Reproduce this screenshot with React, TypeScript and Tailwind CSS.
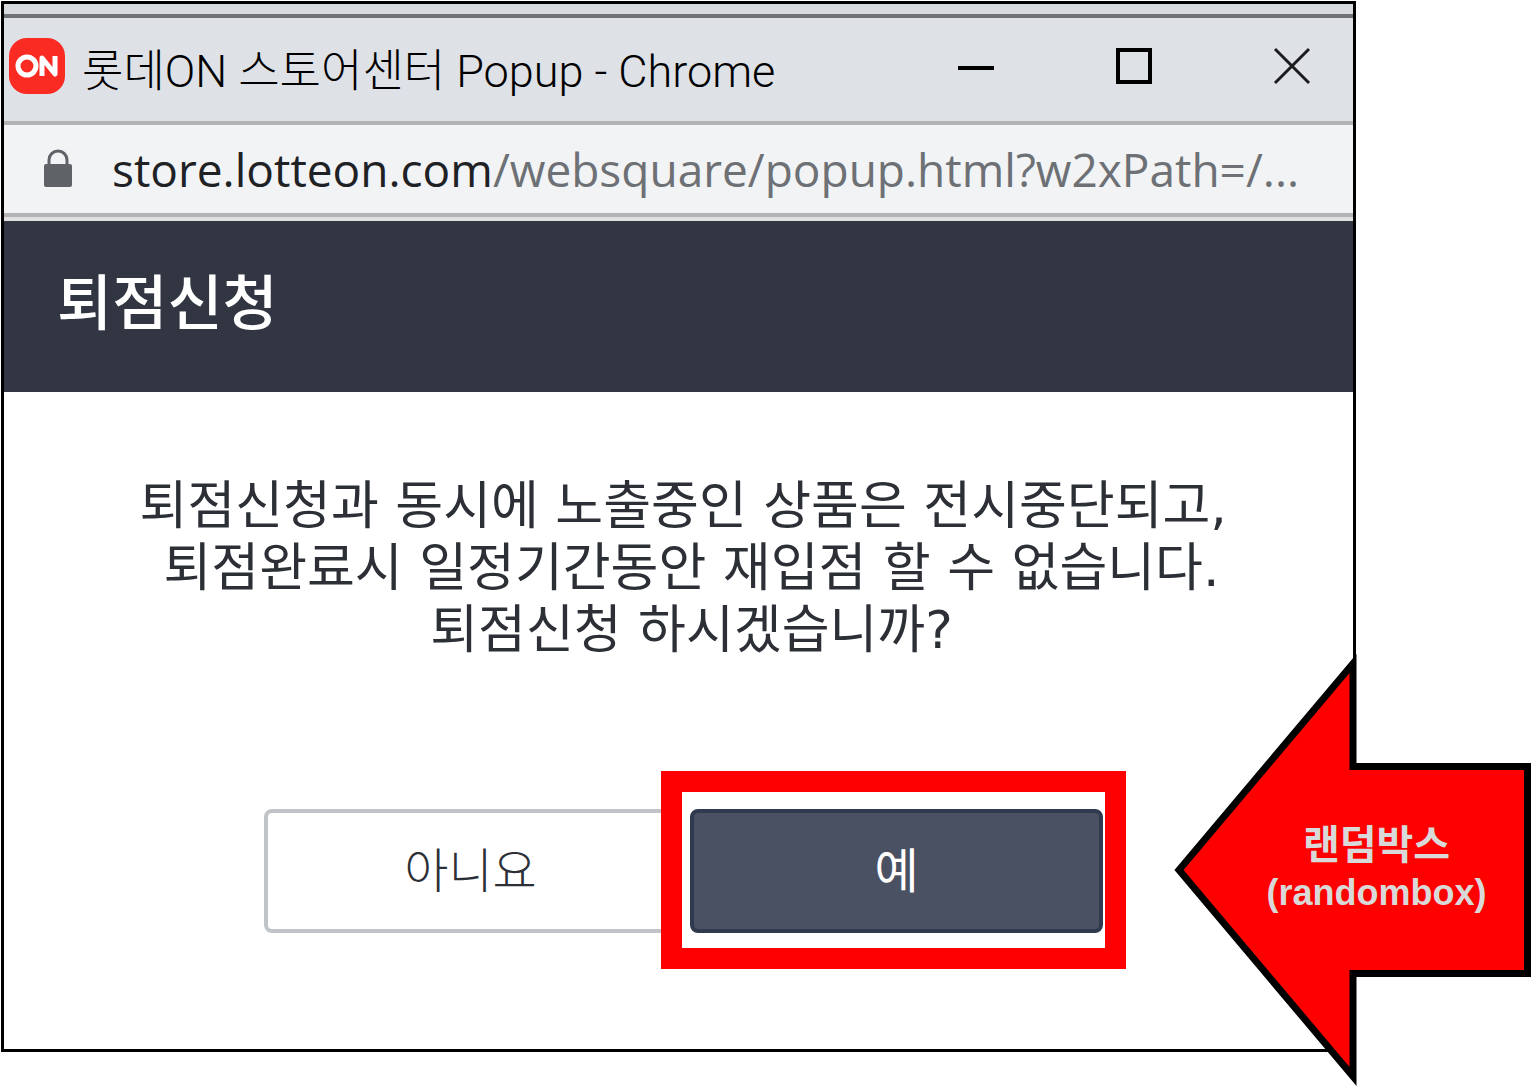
import React from 'react';

const TitleBar: React.FC = () => (
  <header className="flex h-[107px] items-center justify-between border-b-4 border-[#b3b3b3] bg-[#dee1e6] pl-1 pr-10 pb-2">
    <div className="flex items-center gap-4">
      <svg width="58" height="58" viewBox="0 0 58 58" aria-hidden="true">
        <rect x="1" y="1" width="56" height="56" rx="18" fill="#f92b23" />
        <circle cx="19" cy="29" r="9" fill="none" stroke="#fff" strokeWidth="5" />
        <path d="M34 39V21L47 37V19" fill="none" stroke="#fff" strokeWidth="5" strokeLinejoin="round" />
      </svg>
      <h1 className="whitespace-nowrap pt-3 font-['Roboto','Noto_Sans_CJK_KR',sans-serif] text-[45px] leading-[56px] font-light text-black">
        롯데ON 스토어센터 Popup - Chrome
      </h1>
    </div>
    <div className="flex items-center gap-[116px] text-black">
      <button type="button" aria-label="최소화">
        <svg width="42" height="42" viewBox="0 0 42 42">
          <path d="M3 23H39" stroke="currentColor" strokeWidth="4" />
        </svg>
      </button>
      <button type="button" aria-label="최대화">
        <svg width="42" height="42" viewBox="0 0 42 42">
          <rect x="5" y="5" width="32" height="32" fill="none" stroke="currentColor" strokeWidth="4" />
        </svg>
      </button>
      <button type="button" aria-label="닫기">
        <svg width="42" height="42" viewBox="0 0 42 42">
          <path d="M4 4L38 38M38 4L4 38" stroke="#1b1c1e" strokeWidth="3" />
        </svg>
      </button>
    </div>
  </header>
);

const AddressBar: React.FC = () => (
  <div className="flex h-[92px] items-center gap-10 border-b-4 border-[#b3b3b3] bg-[#f1f3f5] pl-10">
    <svg width="28" height="40" viewBox="0 0 28 40" className="shrink-0" aria-hidden="true">
      <path d="M5 16V11a9 9 0 0 1 18 0v5" fill="none" stroke="#5f6368" strokeWidth="3" />
      <rect y="15" width="28" height="23" rx="2" fill="#5f6368" />
    </svg>
    <p className="whitespace-nowrap font-['Open_Sans','Noto_Sans_CJK_KR',sans-serif] text-[46px] leading-[64px] text-[#6d7074]">
      <span className="text-[#202124]">store.lotteon.com</span>/websquare/popup.html?w2xPath=/...
    </p>
  </div>
);

const Arrow: React.FC = () => (
  <div className="absolute right-0 top-[650px] h-[440px] w-[361px]">
    <svg width="361" height="440" viewBox="0 0 361 440" className="absolute inset-0" aria-hidden="true">
      <path
        d="M9 220L183 13.5V116.5H357.5V323.5H183V426.5Z"
        fill="#f00"
        stroke="#000"
        strokeWidth="7"
      />
    </svg>
    <p className="relative pl-[52px] pt-[172px] text-center font-['Liberation_Sans','Noto_Sans_CJK_KR',sans-serif] text-[36px] leading-[46px] font-bold text-[#d9d9d9]">
      <span className="text-[40px]">랜덤박스</span>
      <br />
      (randombox)
    </p>
  </div>
);

const App: React.FC = () => {
  return (
    <div className="relative min-h-[1088px] overflow-hidden bg-white pl-px pr-[175px] pt-px font-['Noto_Sans_CJK_KR',sans-serif]">
      <div className="border-[3px] border-black bg-white">
        <div className="h-[14px] border-b-4 border-[#6f7174] bg-[#d8dbdd]" />
        <TitleBar />
        <AddressBar />

        <div className="h-[175px] border-t-4 border-[#e0e0e0] bg-[#313642] pl-[53px] pt-9">
          <h2 className="text-[60px] leading-[84px] font-medium text-white">퇴점신청</h2>
        </div>

        <main className="flex h-[657px] flex-col items-center pl-[10px] pt-[83px]">
          <p className="whitespace-pre pl-4 text-center font-['DejaVu_Sans','Noto_Sans_CJK_KR',sans-serif] text-[52px] leading-[62px] text-[#2c3036]">
            퇴점신청과 동시에 노출중인 상품은 전시중단되고,&nbsp;
            <br />
            퇴점완료시 일정기간동안 재입점 할 수 없습니다.
            <br />
            퇴점신청 하시겠습니까?
          </p>

          <div className="mt-[148px] flex gap-[13px] text-[48px] leading-[64px]">
            <button type="button" className="h-[124px] w-[413px] rounded-lg border-4 border-[#c0c4c8] pb-2 font-light text-[#2c3036]">
              아니요
            </button>
            <div className="relative">
              <button type="button" className="h-[124px] w-[413px] rounded-lg border-4 border-[#303a4e] bg-[#4a5163] pb-2 text-white">
                예
              </button>
              <div className="pointer-events-none absolute -left-[29px] -right-[23px] -top-[38px] -bottom-9 border-[21px] border-[#f00]" />
            </div>
          </div>
        </main>
      </div>

      <Arrow />
    </div>
  );
};

export default App;
